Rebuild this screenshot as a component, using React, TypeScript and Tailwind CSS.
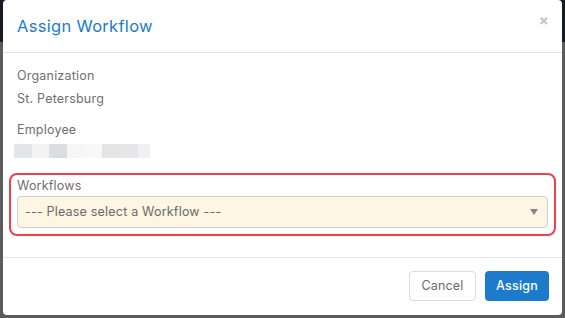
import React from "react";

const blocks = [
  { w: 18, c: "bg-[#e4e5e7]" },
  { w: 17, c: "bg-[#f3f3f3]" },
  { w: 18, c: "bg-[#dcdddf]" },
  { w: 18, c: "bg-[#f6f6f6]" },
  { w: 17, c: "bg-[#f7f8f7]" },
  { w: 18, c: "bg-[#e3e4e3]" },
  { w: 18, c: "bg-[#e7e7e9]" },
  { w: 12, c: "bg-[#f1f1f1]" },
];

export default function App() {
  return (
    <div
      className="relative w-[565px] h-[318px] overflow-hidden bg-[#5b5b5b]"
      style={{ fontFamily: "Inter, 'Open Sans', sans-serif" }}
    >
      <div className="absolute left-0 top-0 w-full h-[42px] bg-[#151a26]" />
      <div className="absolute left-[3px] top-0 w-[559px] h-[315px] bg-white rounded-[4px] flex flex-col">
        <div className="h-[53px] border-b border-[#e3e3e3] flex items-center justify-between pl-[14px] pr-[13px]">
          <span className="text-[16.5px] text-[#1c7ccb] tracking-[0.3px] mt-[1px]">Assign Workflow</span>
          <span className="text-[#c4c4c4] text-[15px] font-bold leading-none -mt-[12px]">×</span>
        </div>
        <div className="h-[205px] border-b border-[#e3e3e3] pt-[14px] relative tracking-[0.2px]">
          <div className="pl-[14px] text-[12.5px] text-[#6f6f6f] leading-[18px]">Organization</div>
          <div className="pl-[14px] mt-[5px] text-[12.5px] text-[#6f6f6f] leading-[18px]">St. Petersburg</div>
          <div className="pl-[14px] mt-[13px] text-[12.5px] text-[#6f6f6f] leading-[18px]">Employee</div>
          <div className="ml-[11px] mt-[5px] flex h-[14px]">
            {blocks.map((b, i) => (
              <div key={i} className={b.c} style={{ width: b.w }} />
            ))}
          </div>
          <div className="mx-[6px] mt-[15px] h-[63px] border-2 border-[#ef414a] rounded-[8px] pt-[2px] px-[6px]">
            <div className="text-[12.5px] text-[#6f6f6f] leading-[17px]">Workflows</div>
            <div className="mt-[2px] h-[32px] bg-[#fcf6e2] border border-[#cfcfcf] rounded-[4px] flex items-center justify-between pl-[7px] pr-[9px]">
              <span className="text-[12.5px] text-[#6a6a6a]">--- Please select a Workflow ---</span>
              <svg width="8" height="6" viewBox="0 0 8 6"><path d="M0 0 L8 0 L4 6 Z" fill="#888" /></svg>
            </div>
          </div>
        </div>
        <div className="flex-1 flex items-center justify-end gap-[9px] pr-[13px] pb-[1px]">
          <button className="h-[30px] w-[67px] border border-[#dcdcdc] rounded-[4px] bg-white text-[12.5px] text-[#6a6a6a] tracking-[0.2px]">
            Cancel
          </button>
          <button className="h-[30px] w-[64px] rounded-[4px] bg-[#1c7ccb] text-[12.5px] text-white font-medium tracking-[0.2px]">
            Assign
          </button>
        </div>
      </div>
    </div>
  );
}
